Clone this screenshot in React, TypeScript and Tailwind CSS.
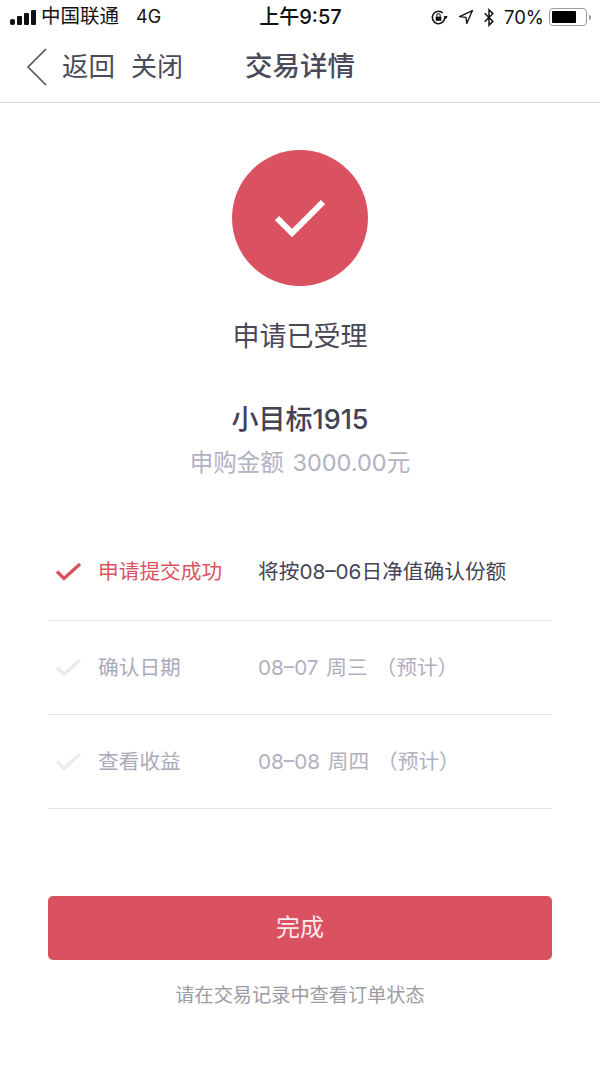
const FONT = "font-['Inter','Noto_Sans_CJK_SC',sans-serif]";

function Check({ className }: { className: string }) {
  return (
    <svg viewBox="0 0 26 20" fill="none" className={className}>
      <path d="M1.5 9.500 L8.500 16.500 L24.500 2" stroke="currentColor" strokeWidth="3.400" />
    </svg>
  );
}

function StatusBar() {
  return (
    <div className="flex h-[34px] items-center justify-between pl-[10px] pr-[9px] text-[19.500px] leading-none text-[#111]">
      <div className="flex w-[220px] items-center">
        <div className="mr-[5px] flex items-end gap-[2px]">
          <span className="h-[6px] w-[5px] rounded-[2px] bg-[#111]" />
          <span className="h-[9px] w-[5px] rounded-[1px] bg-[#111]" />
          <span className="h-[12px] w-[5px] rounded-[1px] bg-[#111]" />
          <span className="h-[15px] w-[5px] rounded-[1px] bg-[#111]" />
        </div>
        <span>中国联通</span>
        <span className="ml-[17px] text-[18px]">4G</span>
      </div>
      <span className="text-[20px] font-medium">上午9:57</span>
      <div className="flex w-[220px] items-center justify-end">
        <svg viewBox="0 0 20 20" className="mr-[10px] h-[19px] w-[19px]" fill="none" stroke="#111">
          <path d="M16.500 10a6.500 6.500 0 1 1-2-4.700" strokeWidth="1.600" />
          <path d="M16 9l3 0-1.500 2.500z" fill="#111" />
          <rect x="7" y="9" width="6" height="4.500" fill="#111" stroke="none" />
          <path d="M8.200 9V7.800a1.800 1.800 0 0 1 3.600 0V9" strokeWidth="1.100" />
        </svg>
        <svg viewBox="0 0 20 20" className="mr-[9px] h-[16px] w-[16px]" fill="none" stroke="#111" strokeWidth="1.700">
          <path d="M18 2 L2 9.500 L10 10.500 L11 18 Z" strokeLinejoin="round" />
        </svg>
        <svg viewBox="0 0 12 22" className="mr-[9px] h-[19px] w-[12px]" fill="none" stroke="#111" strokeWidth="1.700">
          <path d="M1 6 L10.500 15.500 L6 20 V2 L10.500 6.500 L1 16" />
        </svg>
        <span className="text-[18.500px]">70%</span>
        <div className="ml-[5px] flex h-[18px] w-[38px] items-center rounded-[4px] border border-[#9a9a9a] p-[2px]">
          <div className="h-full w-[24px] rounded-[1px] bg-black" />
        </div>
        <span className="ml-[2px] h-[5px] w-[2px] rounded-r-sm bg-[#9a9a9a]" />
      </div>
    </div>
  );
}

function NavBar() {
  return (
    <div className="flex h-[69px] items-center border-b border-[#d4d4d6] pb-[3px] pl-[26px] text-[#4a4a5a]">
      <svg viewBox="0 0 21 38" fill="none" className="mr-[15px] h-[38px] w-[21px]" stroke="#55555f" strokeWidth="1.700">
        <path d="M20 1 L2 19 L20 37" />
      </svg>
      <span className="text-[26.500px] leading-none">返回</span>
      <span className="ml-[16px] text-[26px] leading-none">关闭</span>
      <span className="ml-[62px] text-[27.500px] font-medium leading-none">交易详情</span>
    </div>
  );
}

function Step({ active, label, value }: { active?: boolean; label: string; value: string }) {
  return (
    <div className={active ? "flex h-[94px] items-center border-b border-[#e4e4ec] pb-[4px]" : "flex h-[94px] items-center border-b border-[#e4e4ec]"}>
      <Check className={active ? "ml-[7px] h-[20px] w-[27px] text-[#d95263]" : "ml-[7px] h-[20px] w-[27px] text-[#ebebed]"} />
      <span className={active ? "ml-[16px] w-[160px] text-[20.700px] text-[#dc5263]" : "ml-[16px] w-[160px] text-[20.700px] text-[#aaaabb]"}>
        {label}
      </span>
      <span className={active ? "text-[20.700px] text-[#454555]" : "text-[20.700px] text-[#b0b0c0] [word-spacing:2px]"}>{value}</span>
    </div>
  );
}

export default function App() {
  return (
    <div className={`${FONT} h-[1067px] w-[600px] overflow-hidden bg-white`}>
      <StatusBar />
      <NavBar />

      <div className="flex flex-col items-center">
        <div className="mt-[47px] flex h-[136px] w-[136px] items-center justify-center rounded-full bg-[#da5262]">
          <svg viewBox="0 0 50 38" fill="none" className="h-[38px] w-[50px]" stroke="white" strokeWidth="6">
            <path d="M2 19 L17 34 L48 3" />
          </svg>
        </div>
        <p className="mt-[31px] text-[27px] leading-[40px] text-[#484858]">申请已受理</p>
        <p className="mt-[43px] text-[27px] font-medium leading-[40px] text-[#434354]">小目标1915</p>
        <p className="mt-[5px] text-[23.500px] leading-[36px] text-[#b2b2c2] [word-spacing:2px]">申购金额 3000.00元</p>
      </div>

      <div className="mx-[48px] mt-[46px]">
        <Step active label="申请提交成功" value="将按08–06日净值确认份额" />
        <Step label="确认日期" value="08–07 周三 （预计）" />
        <Step label="查看收益" value="08–08 周四 （预计）" />
      </div>

      <div className="mx-[48px] mt-[87px]">
        <button className="h-[64px] w-full rounded-[5px] bg-[#da5262] text-[24px] text-[#fbe9eb]">完成</button>
        <p className="mt-[21px] text-center text-[19.200px] leading-[28px] text-[#9c9ca4]">请在交易记录中查看订单状态</p>
      </div>
    </div>
  );
}
